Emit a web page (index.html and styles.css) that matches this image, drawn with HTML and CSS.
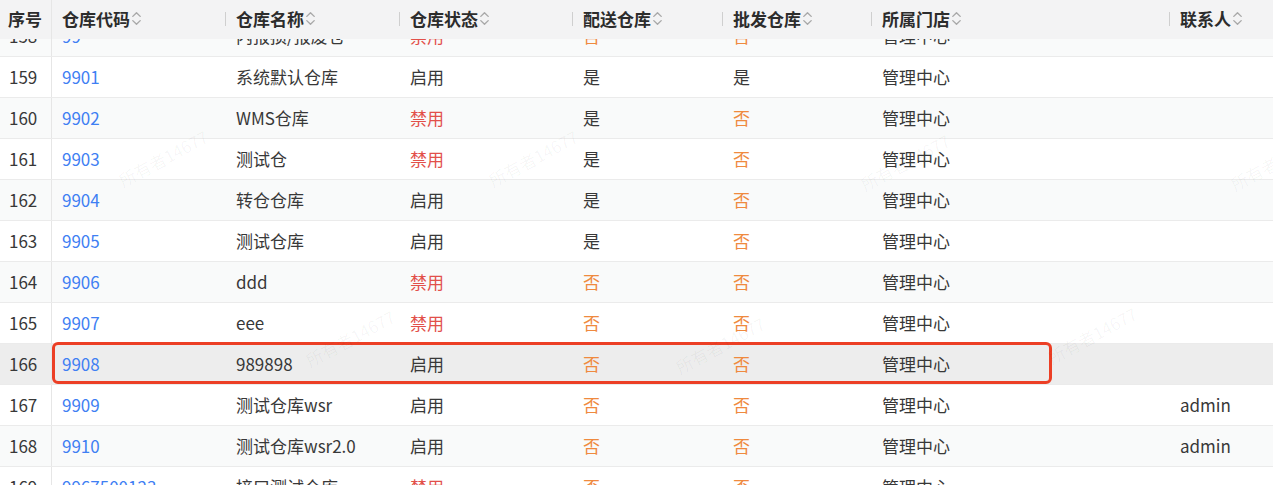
FILE: index.html
```html
<!DOCTYPE html>
<html lang="zh">
<head>
<meta charset="utf-8">
<title>仓库列表</title>
<link rel="stylesheet" href="styles.css">
</head>
<body>
<div class="table">
  <div class="head">
    <div class="hc first">序号</div>
    <div class="hc">仓库代码<svg class="sort" viewBox="0 0 10 16"><polyline points="1.5,6 5,2.5 8.5,6"/><polyline points="1.5,10 5,13.5 8.5,10"/></svg></div>
    <div class="hc sep">仓库名称<svg class="sort" viewBox="0 0 10 16"><polyline points="1.5,6 5,2.5 8.5,6"/><polyline points="1.5,10 5,13.5 8.5,10"/></svg></div>
    <div class="hc sep">仓库状态<svg class="sort" viewBox="0 0 10 16"><polyline points="1.5,6 5,2.5 8.5,6"/><polyline points="1.5,10 5,13.5 8.5,10"/></svg></div>
    <div class="hc sep">配送仓库<svg class="sort" viewBox="0 0 10 16"><polyline points="1.5,6 5,2.5 8.5,6"/><polyline points="1.5,10 5,13.5 8.5,10"/></svg></div>
    <div class="hc sep">批发仓库<svg class="sort" viewBox="0 0 10 16"><polyline points="1.5,6 5,2.5 8.5,6"/><polyline points="1.5,10 5,13.5 8.5,10"/></svg></div>
    <div class="hc sep">所属门店<svg class="sort" viewBox="0 0 10 16"><polyline points="1.5,6 5,2.5 8.5,6"/><polyline points="1.5,10 5,13.5 8.5,10"/></svg></div>
    <div class="hc sep">联系人<svg class="sort" viewBox="0 0 10 16"><polyline points="1.5,6 5,2.5 8.5,6"/><polyline points="1.5,10 5,13.5 8.5,10"/></svg></div>
  </div>

  <div class="body">
    <div class="row even">
      <div class="c first">158</div><div class="c link">99</div><div class="c">内报损/报废仓</div><div class="c red">禁用</div><div class="c orange">否</div><div class="c orange">否</div><div class="c">管理中心</div><div class="c"></div>
    </div>
    <div class="row">
      <div class="c first">159</div><div class="c link">9901</div><div class="c">系统默认仓库</div><div class="c">启用</div><div class="c">是</div><div class="c">是</div><div class="c">管理中心</div><div class="c"></div>
    </div>
    <div class="row even">
      <div class="c first">160</div><div class="c link">9902</div><div class="c">WMS仓库</div><div class="c red">禁用</div><div class="c">是</div><div class="c orange">否</div><div class="c">管理中心</div><div class="c"></div>
    </div>
    <div class="row">
      <div class="c first">161</div><div class="c link">9903</div><div class="c">测试仓</div><div class="c red">禁用</div><div class="c">是</div><div class="c orange">否</div><div class="c">管理中心</div><div class="c"></div>
    </div>
    <div class="row even">
      <div class="c first">162</div><div class="c link">9904</div><div class="c">转仓仓库</div><div class="c">启用</div><div class="c">是</div><div class="c orange">否</div><div class="c">管理中心</div><div class="c"></div>
    </div>
    <div class="row">
      <div class="c first">163</div><div class="c link">9905</div><div class="c">测试仓库</div><div class="c">启用</div><div class="c">是</div><div class="c orange">否</div><div class="c">管理中心</div><div class="c"></div>
    </div>
    <div class="row even">
      <div class="c first">164</div><div class="c link">9906</div><div class="c">ddd</div><div class="c red">禁用</div><div class="c orange">否</div><div class="c orange">否</div><div class="c">管理中心</div><div class="c"></div>
    </div>
    <div class="row">
      <div class="c first">165</div><div class="c link">9907</div><div class="c">eee</div><div class="c red">禁用</div><div class="c orange">否</div><div class="c orange">否</div><div class="c">管理中心</div><div class="c"></div>
    </div>
    <div class="row hover">
      <div class="c first">166</div><div class="c link">9908</div><div class="c">989898</div><div class="c">启用</div><div class="c orange">否</div><div class="c orange">否</div><div class="c">管理中心</div><div class="c"></div>
      <div class="mark"></div>
    </div>
    <div class="row">
      <div class="c first">167</div><div class="c link">9909</div><div class="c">测试仓库wsr</div><div class="c">启用</div><div class="c orange">否</div><div class="c orange">否</div><div class="c">管理中心</div><div class="c">admin</div>
    </div>
    <div class="row even">
      <div class="c first">168</div><div class="c link">9910</div><div class="c">测试仓库wsr2.0</div><div class="c">启用</div><div class="c orange">否</div><div class="c orange">否</div><div class="c">管理中心</div><div class="c">admin</div>
    </div>
    <div class="row">
      <div class="c first">169</div><div class="c link">9967500123</div><div class="c">接口测试仓库</div><div class="c red">禁用</div><div class="c orange">否</div><div class="c orange">否</div><div class="c">管理中心</div><div class="c"></div>
    </div>
  </div>

  <div class="watermarks">
    <span class="wm w1">所有者14677</span>
    <span class="wm w2">所有者14677</span>
    <span class="wm w3">所有者14677</span>
    <span class="wm w4">所有者14677</span>
    <span class="wm w5">所有者14677</span>
    <span class="wm w6">所有者14677</span>
    <span class="wm w7">所有者14677</span>
  </div>
</div>
</body>
</html>
```

FILE: styles.css
```css
html, body {
  margin: 0;
  padding: 0;
  background: #ffffff;
}

body {
  width: 1273px;
  height: 485px;
  overflow: hidden;
  font-family: "Noto Sans CJK SC", "Noto Sans", sans-serif;
  font-size: 17px;
  color: #333333;
}

.table {
  position: relative;
  width: 1273px;
  height: 485px;
  overflow: hidden;
}

.head,
.row {
  display: grid;
  grid-template-columns: 52px 173px 174px 173px 150px 149px 298px 104px;
}

.head {
  position: absolute;
  top: 0;
  left: 0;
  right: 0;
  height: 39px;
  background: #f3f3f4;
  z-index: 3;
}

.hc {
  position: relative;
  display: flex;
  align-items: center;
  padding-left: 11px;
  padding-bottom: 3px;
  font-weight: 700;
  color: #2c2c2c;
  white-space: nowrap;
}

.hc.first {
  padding-left: 8px;
  border-right: 1px solid #e6e6e6;
}

.hc.first + .hc {
  padding-left: 10px;
}

.hc.sep::before {
  content: "";
  position: absolute;
  left: 0;
  top: 12px;
  width: 1px;
  height: 14px;
  background: #cfcfcf;
}

.sort {
  width: 11px;
  height: 17px;
  margin-left: 1px;
  fill: none;
  stroke: #a9a9a9;
  stroke-width: 1.3;
  stroke-linecap: round;
  stroke-linejoin: round;
}

.body {
  padding-top: 16px;
}

.row {
  position: relative;
  height: 40px;
  border-bottom: 1px solid #ebebeb;
  background: #ffffff;
}

.row.even {
  background: #f9fafa;
}

.row.hover {
  background: #ededed;
}

.c {
  display: flex;
  align-items: center;
  padding-left: 11px;
  padding-bottom: 2px;
  white-space: nowrap;
  color: #383838;
}

.c.first {
  padding-left: 9px;
  border-right: 1px solid #e6e6e6;
}

.c.first + .c {
  padding-left: 10px;
}

.link {
  color: #3f7ff3;
}

.red {
  color: #e2504a;
}

.orange {
  color: #ef8a3f;
}

.mark {
  position: absolute;
  left: 52px;
  top: -2px;
  width: 1000px;
  height: 42px;
  box-sizing: border-box;
  border: 3px solid #ec3f25;
  border-radius: 6px;
  pointer-events: none;
}

.watermarks {
  position: absolute;
  inset: 0;
  pointer-events: none;
  z-index: 2;
}

.wm {
  position: absolute;
  font-size: 17px;
  color: rgba(0, 0, 0, 0.04);
  white-space: nowrap;
  transform: translate(-50%, -50%) rotate(-28deg);
}

.w1 { left: 163px; top: 158px; }
.w2 { left: 533px; top: 158px; }
.w3 { left: 905px; top: 162px; }
.w4 { left: 1275px; top: 162px; }
.w5 { left: 350px; top: 338px; }
.w6 { left: 720px; top: 345px; }
.w7 { left: 1092px; top: 335px; }
```
